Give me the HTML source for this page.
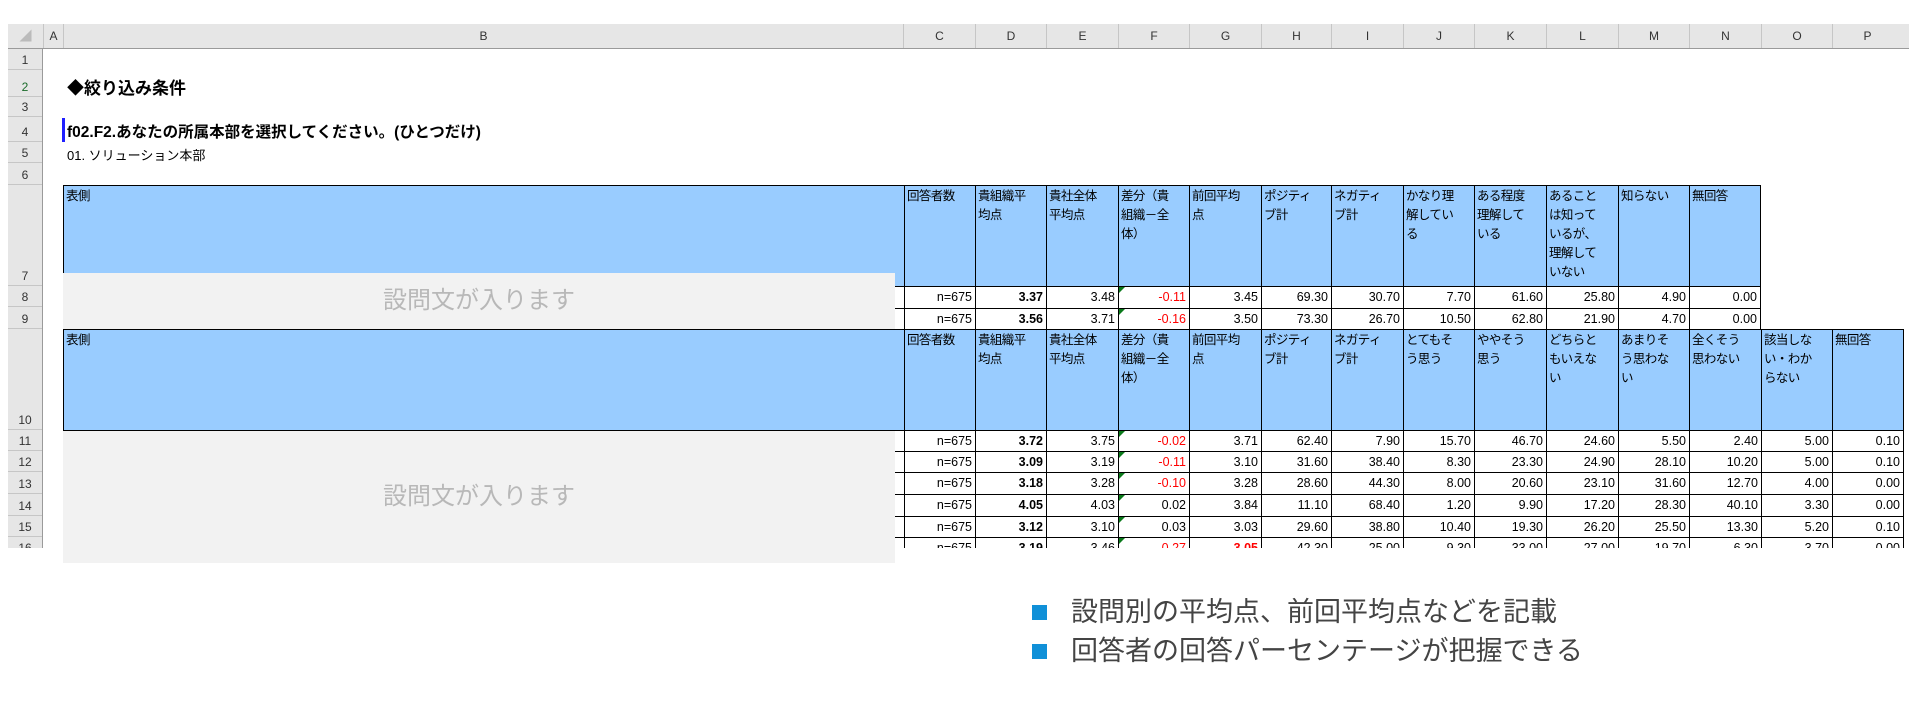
<!DOCTYPE html>
<html><head><meta charset="utf-8"><style>
*{margin:0;padding:0;box-sizing:border-box}
body{width:1909px;height:723px;background:#fff;position:relative;overflow:hidden;font-family:"Liberation Sans","Noto Sans CJK JP",sans-serif;color:#000}
#sheet{position:absolute;left:0;top:0;width:1909px;height:548px;overflow:hidden}
.colhdr{position:absolute;top:24px;left:8px;width:1901px;height:25px;background:#e6e6e6;border-bottom:1px solid #9a9a9a}
.colhdr span{position:absolute;top:0;height:24px;line-height:24px;text-align:center;font-size:12px;color:#333;border-left:1px solid #c6c6c6}
.rowhdr{position:absolute;left:8px;top:49px;width:35px;height:520px;background:#e6e6e6;border-right:1px solid #9a9a9a}
.rowhdr span{position:absolute;left:0;width:34px;text-align:center;font-size:12px;color:#333;border-bottom:1px solid #c6c6c6;display:flex;align-items:flex-end;justify-content:center;padding-bottom:2px}
table{position:absolute;border-collapse:collapse;table-layout:fixed;font-size:12.5px}
td{border:1px solid #000;overflow:hidden;white-space:nowrap;padding:0 3px;position:relative}
tr.h td{background:#99ccff;vertical-align:top;line-height:19px;padding:1px 2px;letter-spacing:-0.6px}
tr.d td{text-align:right;background:#fff;line-height:19px}
td.b{font-weight:bold}
.r{color:#f00}
td.f::before{content:"";position:absolute;left:0;top:0;border-top:6px solid #0a7a1a;border-right:6px solid transparent}
.gray{position:absolute;left:63px;width:832px;background:#f2f2f2;color:#b8b8b8;font-size:24px;text-align:center}
.bul{position:absolute;left:1032px;width:15px;height:15px;background:#1090d8}
.bt{position:absolute;left:1071px;font-size:27px;color:#444;line-height:32px}
</style></head><body>
<div id="sheet">
<div class="colhdr">
<span style="left:0;width:35px;border-left:none;color:#bbb">◢</span>
<span style="left:35px;width:20px">A</span>
<span style="left:55px;width:840px">B</span>
<span style="left:895px;width:72px">C</span>
<span style="left:967px;width:71px">D</span>
<span style="left:1038px;width:72px">E</span>
<span style="left:1110px;width:71px">F</span>
<span style="left:1181px;width:72px">G</span>
<span style="left:1253px;width:70px">H</span>
<span style="left:1323px;width:72px">I</span>
<span style="left:1395px;width:71px">J</span>
<span style="left:1466px;width:72px">K</span>
<span style="left:1538px;width:72px">L</span>
<span style="left:1610px;width:71px">M</span>
<span style="left:1681px;width:72px">N</span>
<span style="left:1753px;width:71px">O</span>
<span style="left:1824px;width:70px">P</span>
</div>
<div class="rowhdr">
<span style="top:0;height:21px">1</span>
<span style="top:21px;height:27px;color:#1a6b2a">2</span>
<span style="top:48px;height:20px">3</span>
<span style="top:68px;height:25px">4</span>
<span style="top:93px;height:21px">5</span>
<span style="top:114px;height:22px">6</span>
<span style="top:136px;height:101px">7</span>
<span style="top:237px;height:21px">8</span>
<span style="top:258px;height:22px">9</span>
<span style="top:280px;height:101px">10</span>
<span style="top:381px;height:21px">11</span>
<span style="top:402px;height:21px">12</span>
<span style="top:423px;height:22px">13</span>
<span style="top:445px;height:22px">14</span>
<span style="top:467px;height:21px">15</span>
<span style="top:488px;height:21px">16</span>
</div>
<div style="position:absolute;left:67px;top:74px;font-size:17px;font-weight:bold">◆絞り込み条件</div>
<div style="position:absolute;left:62px;top:118px;width:3px;height:24px;background:#2020ff"></div>
<div style="position:absolute;left:67px;top:120px;font-size:15.5px;font-weight:bold">f02.F2.あなたの所属本部を選択してください。(ひとつだけ)</div>
<div style="position:absolute;left:67px;top:145px;font-size:13px">01. ソリューション本部</div>

<table style="left:63px;top:185px;width:1627px">
<colgroup><col style="width:841px"><col style="width:71px"><col style="width:71px"><col style="width:72px"><col style="width:71px"><col style="width:72px"><col style="width:70px"><col style="width:72px"><col style="width:71px"><col style="width:72px"><col style="width:72px"><col style="width:71px"><col style="width:71px"></colgroup>
<tr class="h" style="height:101px"><td>表側</td><td>回答者数</td><td>貴組織平<br>均点</td><td>貴社全体<br>平均点</td><td>差分（貴<br>組織－全<br>体）</td><td>前回平均<br>点</td><td>ポジティ<br>ブ計</td><td>ネガティ<br>ブ計</td><td>かなり理<br>解してい<br>る</td><td>ある程度<br>理解して<br>いる</td><td>あること<br>は知って<br>いるが、<br>理解して<br>いない</td><td>知らない</td><td>無回答</td></tr>
<tr class="d" style="height:22px"><td></td><td>n=675</td><td class="b">3.37</td><td>3.48</td><td class="f r">-0.11</td><td>3.45</td><td>69.30</td><td>30.70</td><td>7.70</td><td>61.60</td><td>25.80</td><td>4.90</td><td>0.00</td></tr>
<tr class="d" style="height:22px"><td></td><td>n=675</td><td class="b">3.56</td><td>3.71</td><td class="f r">-0.16</td><td>3.50</td><td>73.30</td><td>26.70</td><td>10.50</td><td>62.80</td><td>21.90</td><td>4.70</td><td>0.00</td></tr>
</table>

<table style="left:63px;top:329px;width:1840px">
<colgroup><col style="width:841px"><col style="width:71px"><col style="width:71px"><col style="width:72px"><col style="width:71px"><col style="width:72px"><col style="width:70px"><col style="width:72px"><col style="width:71px"><col style="width:72px"><col style="width:72px"><col style="width:71px"><col style="width:72px"><col style="width:71px"><col style="width:71px"></colgroup>
<tr class="h" style="height:101px"><td>表側</td><td>回答者数</td><td>貴組織平<br>均点</td><td>貴社全体<br>平均点</td><td>差分（貴<br>組織－全<br>体）</td><td>前回平均<br>点</td><td>ポジティ<br>ブ計</td><td>ネガティ<br>ブ計</td><td>とてもそ<br>う思う</td><td>ややそう<br>思う</td><td>どちらと<br>もいえな<br>い</td><td>あまりそ<br>う思わな<br>い</td><td>全くそう<br>思わない</td><td>該当しな<br>い・わか<br>らない</td><td>無回答</td></tr>
<tr class="d" style="height:21px"><td></td><td>n=675</td><td class="b">3.72</td><td>3.75</td><td class="f r">-0.02</td><td>3.71</td><td>62.40</td><td>7.90</td><td>15.70</td><td>46.70</td><td>24.60</td><td>5.50</td><td>2.40</td><td>5.00</td><td>0.10</td></tr>
<tr class="d" style="height:21px"><td></td><td>n=675</td><td class="b">3.09</td><td>3.19</td><td class="f r">-0.11</td><td>3.10</td><td>31.60</td><td>38.40</td><td>8.30</td><td>23.30</td><td>24.90</td><td>28.10</td><td>10.20</td><td>5.00</td><td>0.10</td></tr>
<tr class="d" style="height:22px"><td></td><td>n=675</td><td class="b">3.18</td><td>3.28</td><td class="f r">-0.10</td><td>3.28</td><td>28.60</td><td>44.30</td><td>8.00</td><td>20.60</td><td>23.10</td><td>31.60</td><td>12.70</td><td>4.00</td><td>0.00</td></tr>
<tr class="d" style="height:22px"><td></td><td>n=675</td><td class="b">4.05</td><td>4.03</td><td class="f">0.02</td><td>3.84</td><td>11.10</td><td>68.40</td><td>1.20</td><td>9.90</td><td>17.20</td><td>28.30</td><td>40.10</td><td>3.30</td><td>0.00</td></tr>
<tr class="d" style="height:21px"><td></td><td>n=675</td><td class="b">3.12</td><td>3.10</td><td class="f">0.03</td><td>3.03</td><td>29.60</td><td>38.80</td><td>10.40</td><td>19.30</td><td>26.20</td><td>25.50</td><td>13.30</td><td>5.20</td><td>0.10</td></tr>
<tr class="d" style="height:21px"><td></td><td>n=675</td><td class="b">3.19</td><td>3.46</td><td class="f r">-0.27</td><td class="b r">3.05</td><td>42.30</td><td>25.00</td><td>9.30</td><td>33.00</td><td>27.00</td><td>19.70</td><td>6.30</td><td>3.70</td><td>0.00</td></tr>
</table>
</div>

<div class="gray" style="top:273px;height:56px;line-height:56px">設問文が入ります</div>
<div class="gray" style="top:431px;height:132px;line-height:132px">設問文が入ります</div>

<div class="bul" style="top:605px"></div>
<div class="bt" style="top:596px">設問別の平均点、前回平均点などを記載</div>
<div class="bul" style="top:644px"></div>
<div class="bt" style="top:635px">回答者の回答パーセンテージが把握できる</div>
</body></html>
